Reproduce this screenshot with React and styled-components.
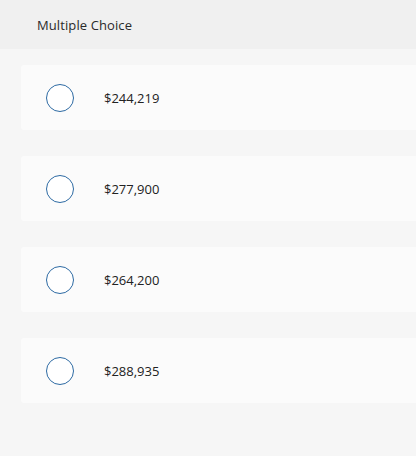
import React from "react";
import styled, { createGlobalStyle } from "styled-components";

const Global = createGlobalStyle`
  html, body { margin: 0; padding: 0; background: #f6f6f6; }
  body { font-family: "Open Sans", "Liberation Sans", sans-serif; }
  * { box-sizing: border-box; }
`;

const Page = styled.div`
  width: 416px;
  height: 456px;
  background: #f6f6f6;
  overflow: hidden;
`;

const Header = styled.div`
  height: 49px;
  background: #f0f0f0;
  display: flex;
  align-items: center;
  padding-left: 37px;
  font-size: 13px;
  color: #2a2a2a;
  letter-spacing: 0.1px;
`;

const List = styled.div`
  display: flex;
  flex-direction: column;
  gap: 26px;
  padding: 16px 0 0 21px;
`;

const Card = styled.label`
  height: 65px;
  width: 420px;
  background: #fbfbfb;
  border-radius: 3px;
  display: flex;
  align-items: center;
  padding-left: 25px;
  cursor: pointer;
`;

const Radio = styled.span`
  width: 28px;
  height: 28px;
  border-radius: 50%;
  border: 1px solid #2d6aa3;
  background: #fff;
  flex: none;
`;

const Value = styled.span`
  margin-left: 30px;
  font-size: 13px;
  color: #222;
`;

const options = ["$244,219", "$277,900", "$264,200", "$288,935"];

export default function App() {
  return (
    <Page>
      <Global />
      <Header>Multiple Choice</Header>
      <List>
        {options.map((o) => (
          <Card key={o}>
            <Radio />
            <Value>{o}</Value>
          </Card>
        ))}
      </List>
    </Page>
  );
}
